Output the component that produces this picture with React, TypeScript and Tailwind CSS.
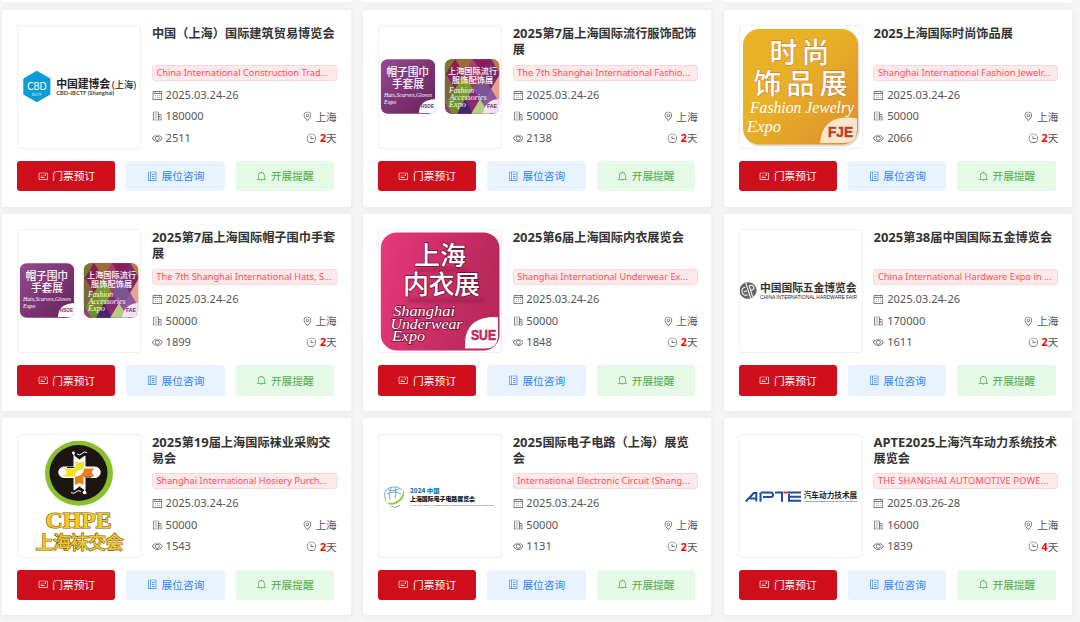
import { Fragment, type ReactNode } from "react";

type Expo = {
  title: string;
  english: string;
  date: string;
  area: string;
  views: string;
  days: number;
  tracking: string;
  logo: ReactNode;
};

const CJK = '"Noto Sans CJK SC", sans-serif';

const icons = {
  calendar:
    "M128 384v512h768V192H768v32a32 32 0 1 1-64 0v-32H320v32a32 32 0 0 1-64 0v-32H128v128h768v64H128zm192-256h384V96a32 32 0 1 1 64 0v32h160a32 32 0 0 1 32 32v768a32 32 0 0 1-32 32H96a32 32 0 0 1-32-32V160a32 32 0 0 1 32-32h160V96a32 32 0 0 1 64 0v32zm-32 384h64v64h-64zm0 192h64v64h-64zm192-192h64v64h-64zm0 192h64v64h-64zm192-192h64v64h-64zm0 192h64v64h-64z",
  building:
    "M192 128v704h384V128H192zm-32-64h448a32 32 0 0 1 32 32v768a32 32 0 0 1-32 32H160a32 32 0 0 1-32-32V96a32 32 0 0 1 32-32zM256 256h256v64H256v-64zm0 192h256v64H256v-64zm0 192h256v64H256v-64zm384-128h128v64H640v-64zm0 128h128v64H640v-64zM64 832h896v64H64v-64zM640 384v448h192V384H640zm-32-64h256a32 32 0 0 1 32 32v512a32 32 0 0 1-32 32H608a32 32 0 0 1-32-32V352a32 32 0 0 1 32-32z",
  view: "M512 160c320 0 512 352 512 352S832 864 512 864 0 512 0 512s192-352 512-352zm0 64c-225.28 0-384.128 208.064-436.8 288 52.608 79.872 211.456 288 436.8 288 225.28 0 384.128-208.064 436.8-288-52.608-79.872-211.456-288-436.8-288zm0 64a224 224 0 1 1 0 448 224 224 0 0 1 0-448zm0 64a160.192 160.192 0 0 0-160 160c0 88.192 71.744 160 160 160s160-71.808 160-160-71.744-160-160-160z",
  location:
    "M800 416a288 288 0 1 0-576 0c0 118.144 94.528 272.128 288 456.576C705.472 688.128 800 534.144 800 416zM512 960C277.312 746.688 160 565.312 160 416a352 352 0 0 1 704 0c0 149.312-117.312 330.688-352 544zM512 512a96 96 0 1 0 0-192 96 96 0 0 0 0 192zm0 64a160 160 0 1 1 0-320 160 160 0 0 1 0 320z",
  clock:
    "M512 896a384 384 0 1 0 0-768 384 384 0 0 0 0 768zm0 64a448 448 0 1 1 0-896 448 448 0 0 1 0 896zM448 288a32 32 0 0 1 64 0v224h224a32 32 0 0 1 0 64H448z",
  ticket:
    "M160 224a32 32 0 0 0-32 32v512a32 32 0 0 0 32 32h704a32 32 0 0 0 32-32V256a32 32 0 0 0-32-32H160zm0-64h704a96 96 0 0 1 96 96v512a96 96 0 0 1-96 96H160a96 96 0 0 1-96-96V256a96 96 0 0 1 96-96zM640 320h128v128H640zM256 448h288v64H256zm0 128h384v64H256z",
  notebook:
    "M192 128v768h640V128H192zm-32-64h704a32 32 0 0 1 32 32v832a32 32 0 0 1-32 32H160a32 32 0 0 1-32-32V96a32 32 0 0 1 32-32zM320 128h64v768h-64zM480 288h256v64H480zm0 192h256v64H480zm0 192h256v64H480z",
  bell: "M448 192v-64a64 64 0 0 1 128 0v64zM256 768h512V448a256 256 0 1 0-512 0v320zm256-640a320 320 0 0 1 320 320v384H192V448a320 320 0 0 1 320-320zM96 768h832q32 0 32 32t-32 32H96q-32 0-32-32t32-32zm352 128h128a64 64 0 0 1-128 0z",
};

function Icon({ name }: { name: keyof typeof icons }) {
  return (
    <svg viewBox="0 0 1024 1024" className="size-[10.7px] shrink-0" fill="currentColor" aria-hidden="true">
      <path d={icons[name]} />
    </svg>
  );
}

function Logo({ children }: { children: ReactNode }) {
  return (
    <svg viewBox="1 1 122 122" className="size-full" fontFamily={CJK}>
      {children}
    </svg>
  );
}

function CbdLogo() {
  return (
    <Logo>
      <path d="M19.8 45.8 33.4 53.5v16L19.8 77.3 6.3 69.5v-16z" fill="#0b9bd7" />
      <text x="10.2" y="65" textLength="19.5" lengthAdjust="spacingAndGlyphs" fontFamily="Lato" fontSize="12" fill="#fff">CBD</text>
      <text x="14.5" y="70.8" textLength="10.5" fontFamily="Lato" fontSize="4.4" fill="#bfe6f6">IBCTF</text>
      <text x="39.2" y="63" textLength="54" fontSize="10.9" fontWeight="700" fill="#222">中国建博会</text>
      <text x="94.5" y="63" textLength="25" lengthAdjust="spacingAndGlyphs" fontSize="9" fontWeight="500" fill="#222">(上海)</text>
      <text x="39.2" y="70" textLength="58" lengthAdjust="spacingAndGlyphs" fontFamily="Lato" fontSize="5" fontWeight="700" fill="#444">CBD-IBCTF (Shanghai)</text>
    </Logo>
  );
}

const diamondColors = ["#7a7a2c", "#a06a3c", "#8b1d5c", "#c07a3a", "#8a1e50", "#a93f6c", "#7b2a6c", "#96704a", "#7d6a3c", "#7c9a2a", "#7a5596", "#e6a48f", "#6f8f2a", "#8a2a6e", "#8d5aa0", "#e6a48f", "#9a3c7c"];

function HatsLogo({ id }: { id: string }) {
  return (
    <Logo>
      <defs>
        <linearGradient id={`${id}-hats`} x1="0" y1="0" x2="1" y2="1">
          <stop offset="0" stopColor="#944b90" />
          <stop offset="1" stopColor="#681f5a" />
        </linearGradient>
        <clipPath id={`${id}-left`}>
          <rect x="2.7" y="34.3" width="54.5" height="54.5" rx="7" />
        </clipPath>
        <clipPath id={`${id}-right`}>
          <rect x="66.8" y="34.3" width="54.5" height="54.5" rx="7" />
        </clipPath>
      </defs>
      <g clipPath={`url(#${id}-left)`}>
        <rect x="2.7" y="34" width="54.5" height="55" fill={`url(#${id}-hats)`} />
        <path d="M41 88q0-13 16-14v11q0 3-3 3z" fill="#fff" />
      </g>
      <g clipPath={`url(#${id}-right)`}>
        <rect x="66.8" y="34" width="54.5" height="55" fill="#8a2460" />
        {diamondColors.map((color, i) => {
          const row = Math.floor(i / 4);
          const cx = 68 + (i % 4) * 18 + (row % 2) * 9;
          const cy = 34 + row * 15;
          return <path key={i} d={`M${cx} ${cy - 15}l9 15-9 15-9-15z`} fill={color} />;
        })}
        <path d="M79 89l8-15 8 15z" fill="#45256f" />
        <path d="M93 89l9-15 9 15z" fill="#b9cb86" />
        <path d="M105 88.5q2-14 17-14.5v11q0 3-3 3.5z" fill="#f3e2ef" />
      </g>
      <g fill="#fff">
        <text x="8.5" y="50.8" textLength="42.5" fontSize="10.8" fontWeight="500">帽子围巾</text>
        <text x="14" y="63.3" textLength="32" fontSize="10.8" fontWeight="500">手套展</text>
        <g fontFamily="Liberation Serif" fontStyle="italic">
          <text x="6" y="72" textLength="48" lengthAdjust="spacingAndGlyphs" fontSize="6">Hats,Scarves,Gloves</text>
          <text x="6" y="79" fontSize="6">Expo</text>
          <g fontSize="8.3">
            <text x="71" y="68.3" textLength="25" lengthAdjust="spacingAndGlyphs">Fashion</text>
            <text x="71.5" y="75.3" textLength="37" lengthAdjust="spacingAndGlyphs">Accessories</text>
            <text x="71" y="82.3" textLength="17" lengthAdjust="spacingAndGlyphs">Expo</text>
          </g>
        </g>
        <text x="70" y="48.5" textLength="49" fontSize="8.1" fontWeight="500">上海国际流行</text>
        <text x="74" y="57.5" textLength="41" fontSize="8.1" fontWeight="500">服饰配饰展</text>
      </g>
      <g fontFamily="Liberation Sans" fontWeight="700" fill="#6b2a63">
        <text x="43" y="83.3" textLength="13" lengthAdjust="spacingAndGlyphs" fontSize="4.6">HSOE</text>
        <text x="109" y="83.3" textLength="10" lengthAdjust="spacingAndGlyphs" fontSize="5.4">FAE</text>
      </g>
    </Logo>
  );
}

function JewelryLogo() {
  return (
    <Logo>
      <defs>
        <linearGradient id="jewelry" x1="0" y1="0" x2="1" y2="1">
          <stop offset="0.4" stopColor="#e9b226" />
          <stop offset="1" stopColor="#dc8e2e" />
        </linearGradient>
      </defs>
      <rect x="5" y="5.5" width="115.5" height="116" rx="16" fill="#dedede" />
      <rect x="4" y="4" width="115" height="115.5" rx="16" fill="url(#jewelry)" />
      <path d="M81 118Q83 93 107 92.500q6-.5 11 1V104q0 14-14 14z" fill="#f8e7cd" />
      <g fill="#fff" stroke="#c9702c" strokeWidth="1" paintOrder="stroke">
        <text x="30.5" y="37.5" textLength="60" fontSize="28" fontWeight="500">时尚</text>
        <text x="14.5" y="68.5" textLength="94" fontSize="28" fontWeight="500">饰品展</text>
      </g>
      <g fill="#fff" fontFamily="Liberation Serif" fontStyle="italic" fontSize="16">
        <text x="11" y="88" textLength="104" lengthAdjust="spacingAndGlyphs">Fashion Jewelry</text>
        <text x="8" y="107" textLength="34" lengthAdjust="spacingAndGlyphs">Expo</text>
      </g>
      <text x="89" y="112" textLength="25" lengthAdjust="spacingAndGlyphs" fontFamily="Liberation Sans" fontWeight="700" fontSize="14" fill="#b5432b" stroke="#b5432b" strokeWidth=".5">FJE</text>
    </Logo>
  );
}

function UnderwearLogo() {
  return (
    <Logo>
      <defs>
        <linearGradient id="underwear" x1="0" y1="0" x2="1" y2="0.2">
          <stop offset="0" stopColor="#e6397c" />
          <stop offset="0.5" stopColor="#cf2f68" />
          <stop offset="1" stopColor="#b9285a" />
        </linearGradient>
        <filter id="underwear-shade">
          <feGaussianBlur stdDeviation="1.8" />
        </filter>
      </defs>
      <rect x="2.8" y="3.4" width="118.7" height="118" rx="16" fill="url(#underwear)" />
      <path d="M87 119.500V112Q89 91 111 88.300q5-.6 9 0V106q0 13.500-13 13.500z" fill="#fff" />
      <path d="M39 39h52v4H39zM30 69h76v5H30z" fill="#8f1e4b" opacity=".5" filter="url(#underwear-shade)" />
      <g fontWeight="500" fontSize="26" fill="#fff" stroke="#6d1238" strokeWidth="1.6" paintOrder="stroke">
        <text x="36" y="36.4" textLength="52">上海</text>
        <text x="25" y="65.4" textLength="77">内衣展</text>
      </g>
      <g fill="#fff" stroke="#6d1238" strokeWidth="1.4" paintOrder="stroke" fontFamily="Liberation Serif" fontStyle="italic" fontSize="15">
        <text x="15" y="87.3" textLength="62" lengthAdjust="spacingAndGlyphs">Shanghai</text>
        <text x="12.5" y="99.8" textLength="72" lengthAdjust="spacingAndGlyphs">Underwear</text>
        <text x="14" y="112.3" textLength="33" lengthAdjust="spacingAndGlyphs">Expo</text>
      </g>
      <text x="93" y="111" textLength="25" lengthAdjust="spacingAndGlyphs" fontFamily="Liberation Sans" fontWeight="700" fontSize="14" fill="#c3285f" stroke="#c3285f" strokeWidth=".6">SUE</text>
    </Logo>
  );
}

function HardwareLogo() {
  return (
    <Logo>
      <g transform="rotate(-18 9 61.5)">
        <ellipse cx="9" cy="61.5" rx="8.6" ry="8.3" fill="#666" />
        <path d="M7.300 57.500Q3 57 3 61.500t4.300 4M9.200 53v17M11.500 69V57.500h2q2 0 2 2.300t-2 2.300h-2M5 61.500h3" fill="none" stroke="#fff" strokeWidth="1" />
      </g>
      <text x="21" y="62.8" textLength="96.5" fontSize="10.8" fontWeight="700" fill="#333">中国国际五金博览会</text>
      <text x="21" y="70" textLength="97" lengthAdjust="spacingAndGlyphs" fontFamily="Liberation Sans" fontSize="5.2" fill="#222">CHINA INTERNATIONAL HARDWARE FAIR</text>
    </Logo>
  );
}

function HosieryLogo() {
  return (
    <Logo>
      <ellipse cx="62" cy="39.3" rx="34" ry="32.5" fill="#8bbf2e" />
      <ellipse cx="61.5" cy="39" rx="29" ry="28" fill="#1d1512" />
      <path d="M57 22l5.500 4 5.500-4v11h10a5 5 0 0 1 0 10.500H68V56l-5.500-4-5.500 4V43.500H47A5 5 0 0 1 47 33h10z" fill="#fff" stroke="#fff" strokeWidth="1" />
      <path d="M58.500 27l4 2 4.500-2v7l-4 2-5 6.500H47v-8h11.500z" fill="#f2e220" />
      <path d="M66.500 51l-4-2-4.500 2v-8l6-2 3-6.500h10v8H66.500z" fill="#ec7f17" />
      <path d="M57.500 33.500H50M67.500 43h7" fill="none" stroke="#1d1512" strokeWidth="1" />
      <path d="M58 42q0-6 9-6.500-1 6-9 6.500z" fill="#fff" />
      <circle cx="46.500" cy="38.300" r="3" fill="#fff" />
      <circle cx="78" cy="38.300" r="3" fill="#fff" />
      <path d="M56 18l1.500 5M60 20q3 2 5-.5t5-1M69 60l-2-6M64 57.500q-3-2-5 .5t-5 .5" fill="none" stroke="#fff" />
      <circle cx="56.5" cy="19" r="1.4" fill="#fff" />
      <circle cx="67.5" cy="58.5" r="1.8" fill="#fff" />
      <g fill="#f5ca22" stroke="#73571b" strokeWidth="1.2" paintOrder="stroke">
        <text x="28.5" y="93.7" textLength="66" lengthAdjust="spacingAndGlyphs" fontFamily="Liberation Serif" fontWeight="700" fontSize="23">CHPE</text>
        <text x="18.5" y="115" textLength="88" fontWeight="500" fontSize="18">上海袜交会</text>
      </g>
    </Logo>
  );
}

function CircuitLogo() {
  return (
    <Logo>
      <g fill="none" stroke="#4f96cf" strokeWidth=".8">
        <path d="M8 67Q4 57 11 54t13 2M9 60q8-4 14 0M13 54q-3 6-1 12M17 53.500q2 6 0 11M10 56q6 2 11-1M13 72.500q5 2 9-1" />
      </g>
      <path d="M6.500 65Q9 71 17 68t8.500-13q3 9-6 14T6.500 65z" fill="#93c83e" />
      <g fontWeight="900">
        <text x="32" y="58.6" textLength="29.5" lengthAdjust="spacingAndGlyphs" fontSize="6.2" fill="#1377bd">2024 中国</text>
        <text x="32" y="66.5" textLength="65" lengthAdjust="spacingAndGlyphs" fontSize="6.2" fill="#111">上海国际电子电路展览会</text>
      </g>
      <text x="32" y="71.5" textLength="84" lengthAdjust="spacingAndGlyphs" fontFamily="Liberation Sans" fontSize="2.4" fill="#444">CHINA (SHANGHAI) INTERNATIONAL ELECTRONIC CIRCUITS EXHIBITION</text>
    </Logo>
  );
}

function ApteLogo() {
  return (
    <Logo>
      <g fill="none" stroke="#1d4f9c" strokeWidth="2">
        <path d="M6.800 67.500l8-8.500h2.500v8.500M11 64.500h6M21.500 67.800V58.500M22 58.500h9.500q2.500 0 2.500 2.300t-2.500 2.300H24M36 58.500h8M43 58.500v9.300M62 58.500H49M62 62.800H51M62 66.800H50V60" />
      </g>
      <path d="M44.500 57.500h5l-1 2h-4z" fill="#d93a35" />
      <text x="64.7" y="64.3" textLength="53.5" fontSize="7.6" fontWeight="700" fill="#222">汽车动力技术展</text>
      <text x="65" y="68.2" textLength="53" lengthAdjust="spacingAndGlyphs" fontFamily="Liberation Sans" fontWeight="700" fontSize="2.2" fill="#333">AUTOMOTIVE POWERTRAIN TECHNOLOGY EXHIBITION</text>
    </Logo>
  );
}

const expos: Expo[] = [
  { title: "中国（上海）国际建筑贸易博览会", english: "China International Construction Trad...", date: "2025.03.24-26", area: "180000", views: "2511", days: 2, tracking: "tracking-[0.04px]", logo: <CbdLogo /> },
  { title: "2025第7届上海国际流行服饰配饰展", english: "The 7th Shanghai International Fashio...", date: "2025.03.24-26", area: "50000", views: "2138", days: 2, tracking: "tracking-[0.02px]", logo: <HatsLogo id="fashion" /> },
  { title: "2025上海国际时尚饰品展", english: "Shanghai International Fashion Jewelr...", date: "2025.03.24-26", area: "50000", views: "2066", days: 2, tracking: "tracking-[0.08px]", logo: <JewelryLogo /> },
  { title: "2025第7届上海国际帽子围巾手套展", english: "The 7th Shanghai International Hats, S...", date: "2025.03.24-26", area: "50000", views: "1899", days: 2, tracking: "tracking-[0.04px]", logo: <HatsLogo id="hats" /> },
  { title: "2025第6届上海国际内衣展览会", english: "Shanghai International Underwear Ex...", date: "2025.03.24-26", area: "50000", views: "1848", days: 2, tracking: "tracking-[0.03px]", logo: <UnderwearLogo /> },
  { title: "2025第38届中国国际五金博览会", english: "China International Hardware Expo in ...", date: "2025.03.24-26", area: "170000", views: "1611", days: 2, tracking: "tracking-[0.04px]", logo: <HardwareLogo /> },
  { title: "2025第19届上海国际袜业采购交易会", english: "Shanghai International Hosiery Purch...", date: "2025.03.24-26", area: "50000", views: "1543", days: 2, tracking: "tracking-[0.04px]", logo: <HosieryLogo /> },
  { title: "2025国际电子电路（上海）展览会", english: "International Electronic Circuit (Shang...", date: "2025.03.24-26", area: "50000", views: "1131", days: 2, tracking: "tracking-[0.05px]", logo: <CircuitLogo /> },
  { title: "APTE2025上海汽车动力系统技术展览会", english: "THE SHANGHAI AUTOMOTIVE POWE...", date: "2025.03.26-28", area: "16000", views: "1839", days: 4, tracking: "tracking-[0.22px]", logo: <ApteLogo /> },
];

// Latin runs are set a touch larger than the Chinese around them.
function Title({ text }: { text: string }) {
  return (
    <h3 className="h-[33px] pt-px text-[12.2px] leading-4 font-bold text-[#333]">
      {text.split(/([A-Z0-9]+)/).map((part, i) =>
        i % 2 ? (
          <span key={i} className="text-[13px] leading-none">{part}</span>
        ) : (
          <Fragment key={i}>{part}</Fragment>
        ),
      )}
    </h3>
  );
}

function ExpoCard({ expo }: { expo: Expo }) {
  return (
    <article className="h-[197px] rounded-[2px] bg-white pt-[15.3px] pr-[13.9px] pl-[15px] shadow-[0_1px_7px_rgba(30,35,70,0.08)]">
      <div className="flex gap-[10.7px]">
        <div className="size-[124px] shrink-0 overflow-hidden rounded-[3px] border border-[#f0f0f0]">{expo.logo}</div>
        <div className="min-w-0 flex-1">
          <Title text={expo.title} />
          <div className={`mt-[6.7px] h-4 overflow-hidden rounded-[3px] border border-[#ffd6d8] bg-[#ffeaeb] px-[3.5px] text-[9.2px] leading-[14px] whitespace-nowrap text-[#ff4d55] ${expo.tracking}`}>
            {expo.english}
          </div>
          <div className="mt-[3.8px] text-[11.1px] text-[#555]">
            <div className="flex h-[21.5px] items-center gap-[3px]">
              <Icon name="calendar" />
              <span>{expo.date}</span>
            </div>
            <div className="flex h-[21.5px] items-center justify-between">
              <span className="flex items-center gap-[3px]"><Icon name="building" />{expo.area}</span>
              <span className="flex items-center gap-[3px] text-[10.7px]"><Icon name="location" />上海</span>
            </div>
            <div className="flex h-[21px] items-center justify-between">
              <span className="flex items-center gap-[3px]"><Icon name="view" />{expo.views}</span>
              <span className="flex items-center gap-[3px] text-[10.7px]">
                <Icon name="clock" />
                <span><b className="text-[#f00]">{expo.days}</b>天</span>
              </span>
            </div>
          </div>
        </div>
      </div>
      <div className="mt-[12px] flex gap-[11px] text-[10.7px]">
        <button className="flex h-[30.5px] w-[98.3px] items-center justify-center gap-[4px] rounded-[3px] bg-[#ce0e1a] text-white"><Icon name="ticket" />门票预订</button>
        <button className="flex h-[30.5px] w-[98.3px] items-center justify-center gap-[4px] rounded-[3px] bg-[#e9f3ff] text-[#2b84f7]"><Icon name="notebook" />展位咨询</button>
        <button className="flex h-[30.5px] w-[98.3px] items-center justify-center gap-[4px] rounded-[3px] bg-[#e4f9e6] text-[#4fab48]"><Icon name="bell" />开展提醒</button>
      </div>
    </article>
  );
}

export default function App() {
  return (
    <main className="h-[622px] overflow-hidden bg-[#f6f6f7] pl-[2.2px] font-['Noto_Sans','Noto_Sans_CJK_SC',sans-serif]">
      <div className="grid w-[1070px] grid-cols-[repeat(3,348.5px)] gap-x-[12.3px]">
        {[0, 1, 2].map((i) => (
          <div key={i} className="h-[2.4px] bg-white shadow-[0_1px_7px_rgba(30,35,70,0.08)]" />
        ))}
      </div>
      <div className="mt-[7.3px] grid w-[1070px] grid-cols-[repeat(3,348.5px)] gap-x-[12.3px] gap-y-[7.3px]">
        {expos.map((expo) => (
          <ExpoCard key={expo.title} expo={expo} />
        ))}
      </div>
    </main>
  );
}
